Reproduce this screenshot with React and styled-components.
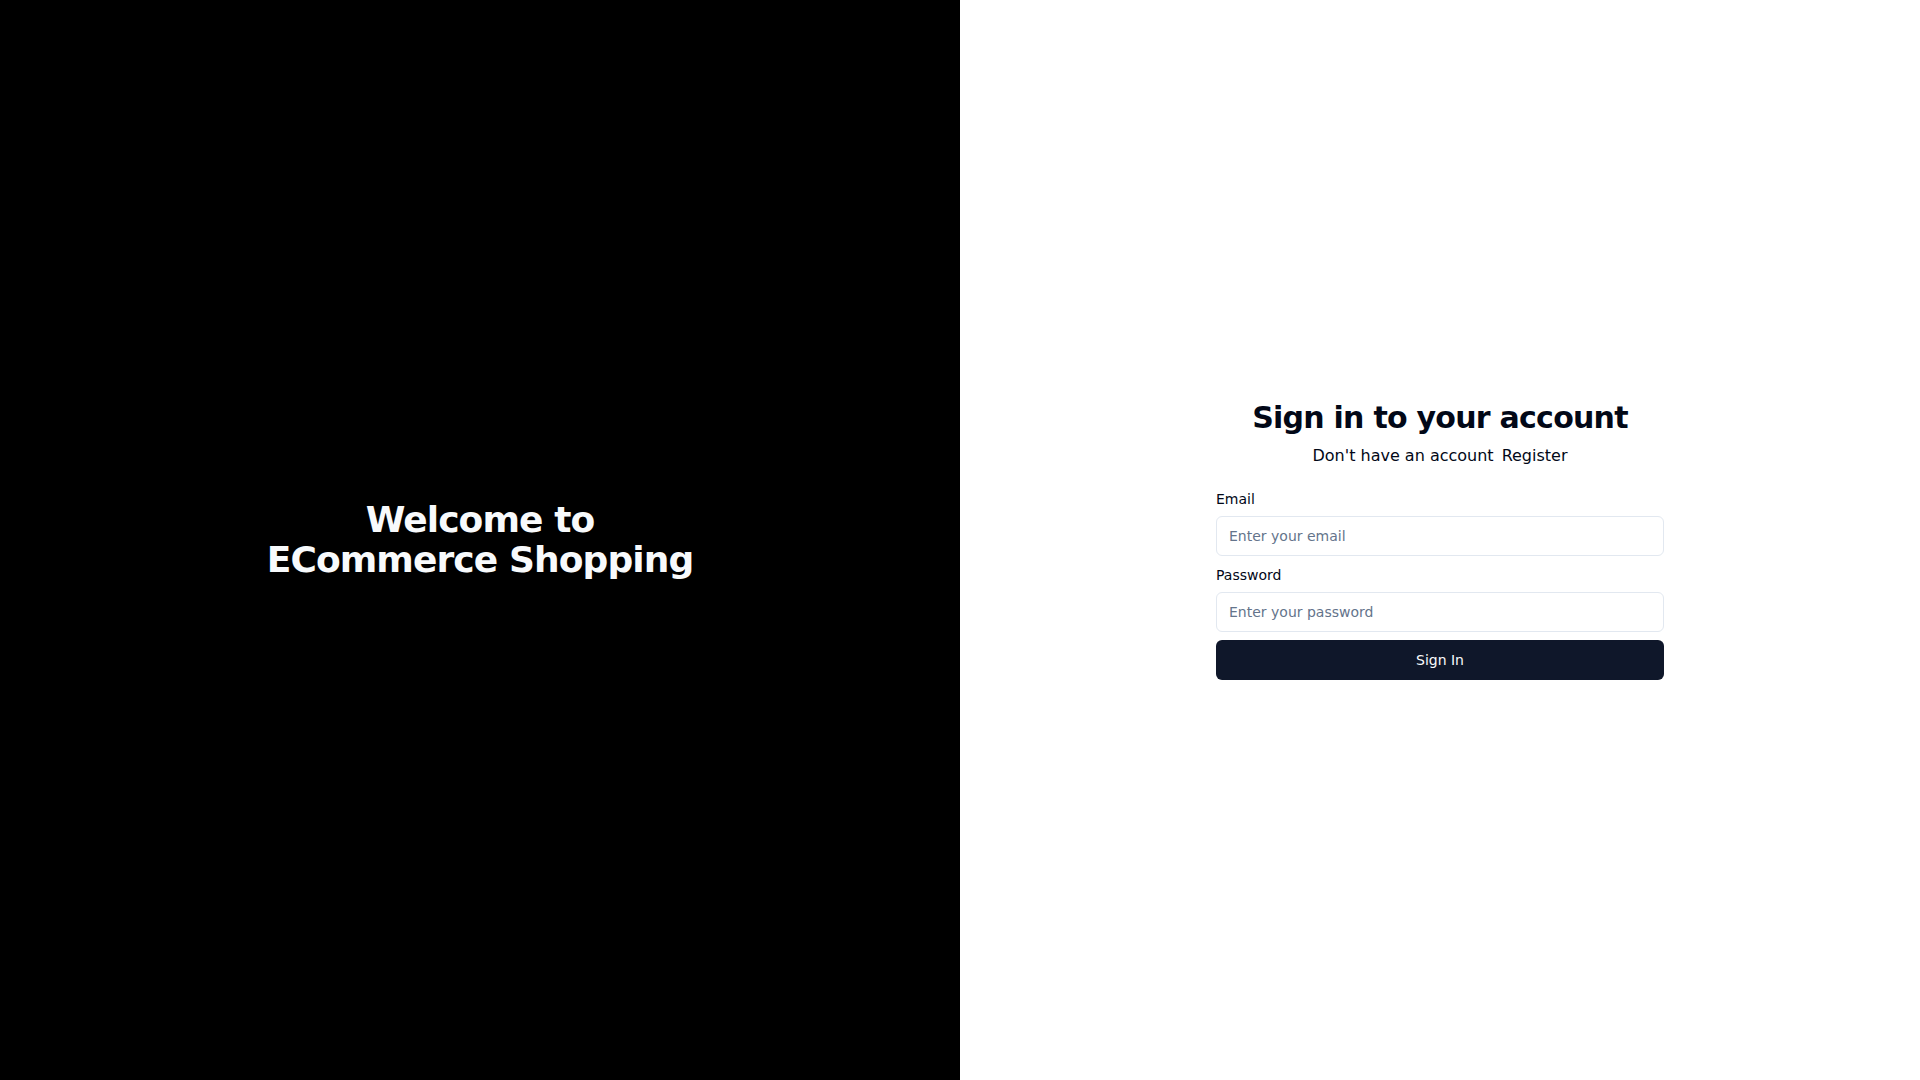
import React from 'react';
import styled, { createGlobalStyle } from 'styled-components';

const GlobalStyle = createGlobalStyle`
  *, *::before, *::after {
    box-sizing: border-box;
  }
  html, body {
    margin: 0;
    padding: 0;
  }
  body {
    font-family: "DejaVu Sans", "Liberation Sans", sans-serif;
    color: #020817;
    background: #ffffff;
  }
`;

const Page = styled.div`
  display: grid;
  grid-template-columns: 1fr 1fr;
  min-height: 100vh;
`;

const Hero = styled.section`
  display: flex;
  align-items: center;
  justify-content: center;
  background: #000000;
`;

const HeroTitle = styled.h1`
  margin: 0;
  font-size: 36px;
  line-height: 40px;
  font-weight: 700;
  letter-spacing: -0.025em;
  text-align: center;
  color: #f8fafc;
`;

const Side = styled.section`
  display: flex;
  align-items: center;
  justify-content: center;
  padding: 0 16px;
`;

const Box = styled.div`
  width: 448px;
  display: flex;
  flex-direction: column;
  gap: 24px;
`;

const Header = styled.div`
  display: flex;
  flex-direction: column;
  align-items: center;
  gap: 8px;
`;

const Title = styled.h2`
  margin: 0;
  font-size: 30px;
  line-height: 36px;
  font-weight: 700;
  letter-spacing: -0.025em;
  color: #020817;
`;

const Subtitle = styled.p`
  margin: 0;
  font-size: 16px;
  line-height: 24px;
  color: #020817;
`;

const RegisterLink = styled.a`
  margin-left: 8px;
  color: inherit;
  text-decoration: none;
  cursor: pointer;
`;

const Form = styled.form`
  display: flex;
  flex-direction: column;
`;

const Field = styled.div`
  display: flex;
  flex-direction: column;
  gap: 10px;
  margin-bottom: ${(p) => (p.$last ? '8px' : '12px')};
`;

const Label = styled.label`
  font-size: 14px;
  line-height: 14px;
  font-weight: 500;
  color: #020817;
`;

const Input = styled.input`
  height: 40px;
  width: 100%;
  padding: 8px 12px;
  border: 1px solid #e2e8f0;
  border-radius: 6px;
  background: #ffffff;
  font-family: inherit;
  font-size: 14px;
  color: #020817;
  outline: none;

  &::placeholder {
    color: #64748b;
  }
`;

const Button = styled.button`
  height: 40px;
  width: 100%;
  border: none;
  border-radius: 6px;
  background: #0f172a;
  color: #f8fafc;
  font-family: inherit;
  font-size: 14px;
  font-weight: 500;
  cursor: pointer;
`;

export default function App() {
  return (
    <>
      <GlobalStyle />
      <Page>
        <Hero>
          <HeroTitle>
            Welcome to
            <br />
            ECommerce Shopping
          </HeroTitle>
        </Hero>
        <Side>
          <Box>
            <Header>
              <Title>Sign in to your account</Title>
              <Subtitle>
                Don't have an account
                <RegisterLink href="#">Register</RegisterLink>
              </Subtitle>
            </Header>
            <Form onSubmit={(e) => e.preventDefault()}>
              <Field>
                <Label htmlFor="email">Email</Label>
                <Input id="email" type="email" placeholder="Enter your email" />
              </Field>
              <Field $last>
                <Label htmlFor="password">Password</Label>
                <Input id="password" type="password" placeholder="Enter your password" />
              </Field>
              <Button type="submit">Sign In</Button>
            </Form>
          </Box>
        </Side>
      </Page>
    </>
  );
}
